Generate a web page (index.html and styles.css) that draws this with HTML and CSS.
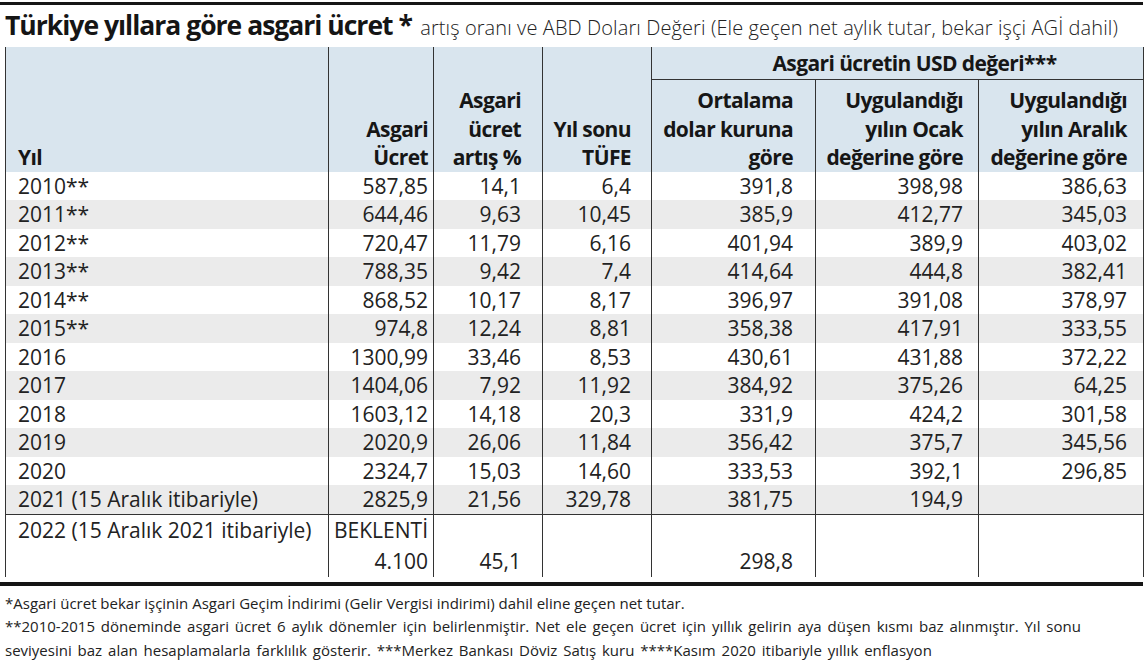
FILE: index.html
```html
<!DOCTYPE html>
<html lang="tr">
<head>
<meta charset="utf-8">
<title>Türkiye yıllara göre asgari ücret</title>
<link rel="stylesheet" href="styles.css">
</head>
<body>
<div class="page">
  <div class="rule-top"></div>
  <h1 class="title"><span class="title-main">Türkiye yıllara göre asgari ücret *</span> <span class="title-sub">artış oranı ve ABD Doları Değeri (Ele geçen net aylık tutar, bekar işçi AGİ dahil)</span></h1>
  <table class="data">
    <colgroup>
      <col class="c-year"><col class="c-wage"><col class="c-inc"><col class="c-cpi"><col class="c-avg"><col class="c-jan"><col class="c-dec">
    </colgroup>
    <thead>
      <tr class="head-a">
        <th rowspan="2" class="left">Yıl</th>
        <th rowspan="2" class="p-wage">Asgari<br>Ücret</th>
        <th rowspan="2" class="p-inc">Asgari<br>ücret<br>artış %</th>
        <th rowspan="2" class="p-cpi">Yıl sonu<br>TÜFE</th>
        <th colspan="3" class="usd">Asgari ücretin USD değeri***</th>
      </tr>
      <tr class="head-b">
        <th class="p-avg">Ortalama<br>dolar kuruna<br>göre</th>
        <th class="p-jan">Uygulandığı<br>yılın Ocak<br>değerine göre</th>
        <th class="p-dec">Uygulandığı<br>yılın Aralık<br>değerine göre</th>
      </tr>
    </thead>
    <tbody>
      <tr><td class="left">2010**</td><td>587,85</td><td>14,1</td><td>6,4</td><td>391,8</td><td>398,98</td><td>386,63</td></tr>
      <tr><td class="left">2011**</td><td>644,46</td><td>9,63</td><td>10,45</td><td>385,9</td><td>412,77</td><td>345,03</td></tr>
      <tr><td class="left">2012**</td><td>720,47</td><td>11,79</td><td>6,16</td><td>401,94</td><td>389,9</td><td>403,02</td></tr>
      <tr><td class="left">2013**</td><td>788,35</td><td>9,42</td><td>7,4</td><td>414,64</td><td>444,8</td><td>382,41</td></tr>
      <tr><td class="left">2014**</td><td>868,52</td><td>10,17</td><td>8,17</td><td>396,97</td><td>391,08</td><td>378,97</td></tr>
      <tr><td class="left">2015**</td><td>974,8</td><td>12,24</td><td>8,81</td><td>358,38</td><td>417,91</td><td>333,55</td></tr>
      <tr><td class="left">2016</td><td>1300,99</td><td>33,46</td><td>8,53</td><td>430,61</td><td>431,88</td><td>372,22</td></tr>
      <tr><td class="left">2017</td><td>1404,06</td><td>7,92</td><td>11,92</td><td>384,92</td><td>375,26</td><td>64,25</td></tr>
      <tr><td class="left">2018</td><td>1603,12</td><td>14,18</td><td>20,3</td><td>331,9</td><td>424,2</td><td>301,58</td></tr>
      <tr><td class="left">2019</td><td>2020,9</td><td>26,06</td><td>11,84</td><td>356,42</td><td>375,7</td><td>345,56</td></tr>
      <tr><td class="left">2020</td><td>2324,7</td><td>15,03</td><td>14,60</td><td>333,53</td><td>392,1</td><td>296,85</td></tr>
      <tr><td class="left">2021 (15 Aralık itibariyle)</td><td>2825,9</td><td>21,56</td><td>329,78</td><td>381,75</td><td>194,9</td><td></td></tr>
      <tr class="exp exp-a"><td class="left">2022 (15 Aralık 2021 itibariyle)</td><td>BEKLENTİ</td><td></td><td></td><td></td><td></td><td></td></tr>
      <tr class="exp exp-b"><td class="left"></td><td>4.100</td><td>45,1</td><td></td><td>298,8</td><td></td><td></td></tr>
    </tbody>
  </table>
  <div class="rule-bottom"></div>
  <div class="notes">
    <p>*Asgari ücret bekar işçinin Asgari Geçim İndirimi (Gelir Vergisi indirimi) dahil eline geçen net tutar.</p>
    <p class="wide">**2010-2015 döneminde asgari ücret 6 aylık dönemler için belirlenmiştir. Net ele geçen ücret için yıllık gelirin aya düşen kısmı baz alınmıştır. Yıl sonu<br>seviyesini baz alan hesaplamalarla farklılık gösterir. ***Merkez Bankası Döviz Satış kuru ****Kasım 2020 itibariyle yıllık enflasyon</p>
  </div>
</div>
</body>
</html>
```

FILE: styles.css
```css
html, body {
  margin: 0;
  padding: 0;
  background: #ffffff;
}

body {
  font-family: "Open Sans", "Noto Sans", sans-serif;
  color: #1c1c1c;
}

.page {
  width: 1143px;
  padding-top: 2px;
}

.rule-top {
  height: 3px;
  background: #151515;
}

.title {
  margin: 0;
  padding: 0 0 0 5px;
  height: 40px;
  line-height: 36px;
  white-space: nowrap;
}

.title-main {
  font-size: 26.5px;
  font-weight: 700;
  letter-spacing: -1px;
  color: #151515;
}

.title-sub {
  font-size: 20px;
  font-weight: 300;
  letter-spacing: 0.1px;
  color: #222;
}

.data {
  margin-left: 5px;
  width: 1138px;
  border-collapse: collapse;
  table-layout: fixed;
  font-size: 21px;
  border-top: 2px solid #fff;
}

.c-year { width: 323px; }
.c-wage { width: 105px; }
.c-inc  { width: 109px; }
.c-cpi  { width: 109px; }
.c-avg  { width: 164px; }
.c-jan  { width: 163px; }
.c-dec  { width: 165px; }

.data th,
.data td {
  border-left: 1px solid #333;
  border-right: 1px solid #333;
  padding: 0 5px 0 5px;
  text-align: right;
  white-space: nowrap;
}

.data td:nth-child(3), .data th.p-inc { padding-right: 21px; }
.data td:nth-child(4), .data th.p-cpi { padding-right: 20px; }
.data td:nth-child(5), .data th.p-avg { padding-right: 22px; }
.data td:nth-child(6), .data th.p-jan { padding-right: 15px; }
.data td:nth-child(7), .data th.p-dec { padding-right: 16px; }

.data th {
  background: #d9e5ee;
  font-weight: 700;
  vertical-align: bottom;
  line-height: 28.5px;
  letter-spacing: -0.6px;
  color: #161616;
}

.data .left {
  text-align: left;
  padding-left: 12px;
}

.head-a th {
  height: 32px;
}

.data th.usd {
  text-align: center;
  vertical-align: middle;
  padding-left: 34px;
  padding-right: 0;
  border-bottom: 1px solid #333;
}

.head-b th {
  padding-top: 6px;
}

.data td {
  line-height: 28.5px;
  height: 28.5px;
  color: #222;
}

.data tbody tr:nth-child(even) td {
  background: #ebebeb;
}

.data tbody tr.exp td {
  background: #ffffff;
  line-height: 31px;
  height: 31px;
}

.data tr.exp-a td {
  border-top: 1px solid #333;
}

.rule-bottom {
  margin-top: 5px;
  height: 4px;
  background: #151515;
}

.notes {
  padding: 6px 0 0 5px;
  font-size: 15px;
  line-height: 23.5px;
  color: #222;
}

.notes p {
  margin: 0;
}

.notes .wide {
  word-spacing: 2px;
}
```
